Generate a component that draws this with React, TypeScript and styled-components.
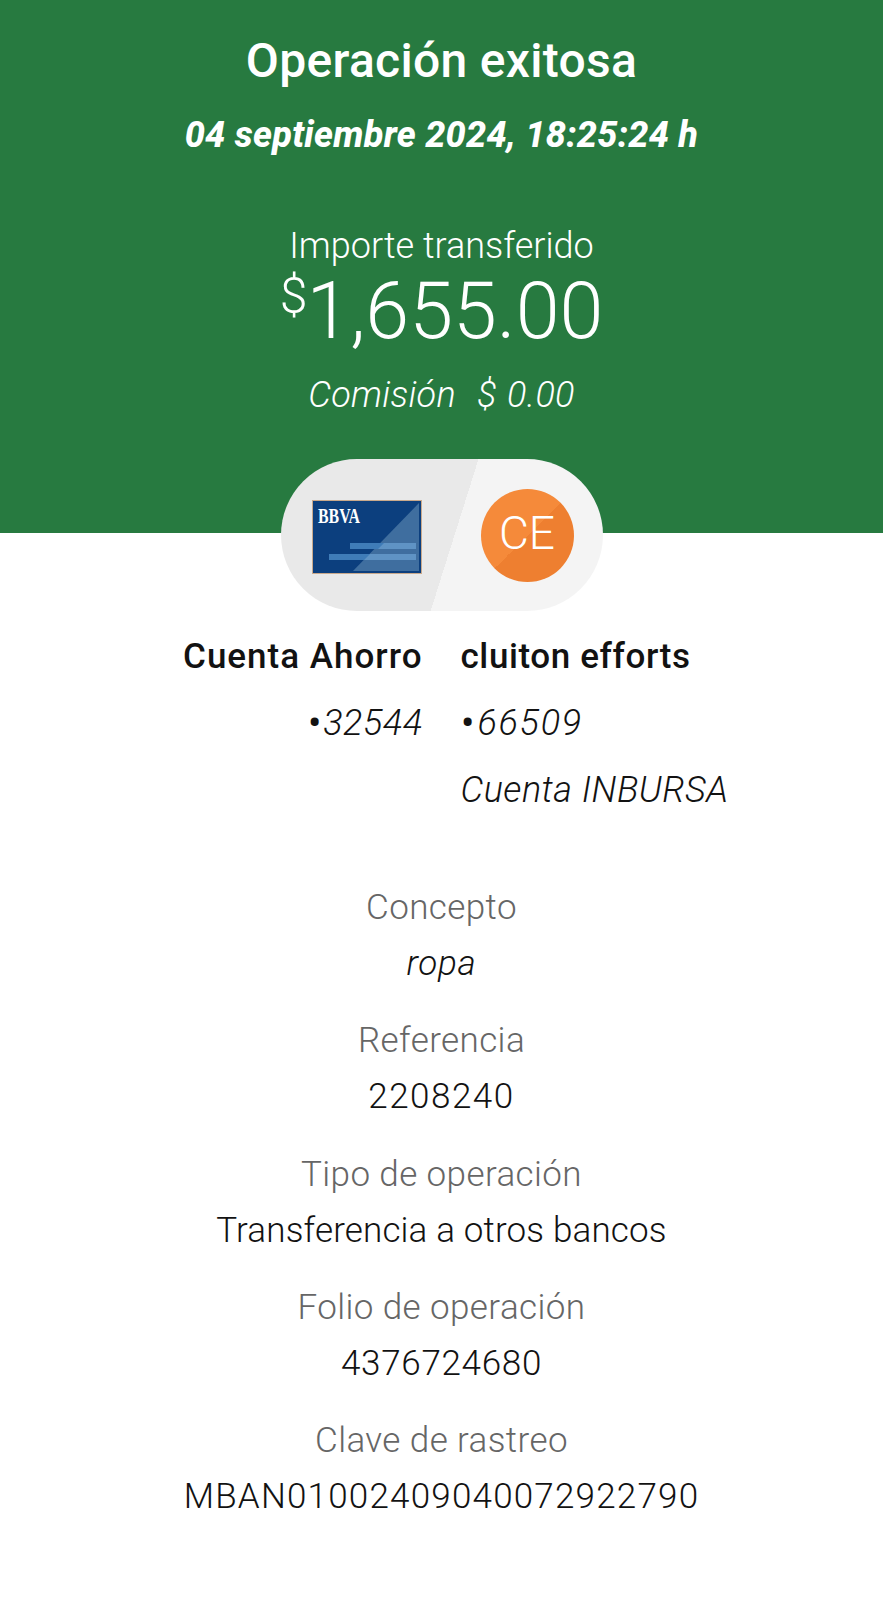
import React from 'react';
import styled, { createGlobalStyle } from 'styled-components';

const GlobalStyle = createGlobalStyle`
  html, body {
    margin: 0;
    padding: 0;
    background: #fff;
  }
  body {
    font-family: 'Roboto', 'Liberation Sans', sans-serif;
  }
`;

const Page = styled.div`
  width: 883px;
  height: 1600px;
  overflow: hidden;
  display: flex;
  flex-direction: column;
  align-items: center;
  background: #fff;
`;

const Header = styled.header`
  align-self: stretch;
  height: 533px;
  padding-top: 34px;
  box-sizing: border-box;
  display: flex;
  flex-direction: column;
  align-items: center;
  background: #277a40;
  color: #fff;
`;

const Title = styled.h1`
  margin: 0;
  font-size: 48px;
  line-height: 54px;
  font-weight: 500;
  letter-spacing: 0.3px;
`;

const DateLine = styled.div`
  margin-top: 26px;
  font-size: 36px;
  line-height: 42px;
  font-weight: 800;
  font-style: italic;
  letter-spacing: 0.3px;
`;

const AmountLabel = styled.div`
  margin-top: 69px;
  font-size: 36px;
  line-height: 42px;
  font-weight: 300;
`;

const Amount = styled.div`
  margin-top: 3px;
  display: flex;
  align-items: flex-start;
  font-size: 79px;
  line-height: 82px;
  font-weight: 300;
`;

const Currency = styled.span`
  font-size: 50px;
  line-height: 52px;
  margin-right: -1px;
`;

const Fee = styled.div`
  margin-top: 22px;
  font-size: 36px;
  line-height: 42px;
  font-weight: 300;
  font-style: italic;
  letter-spacing: 0.3px;
  word-spacing: 1.5px;
  white-space: pre;
`;

const Pill = styled.div`
  width: 322px;
  height: 152px;
  margin-top: -74px;
  padding: 0 29px 0 31px;
  box-sizing: border-box;
  flex: none;
  display: flex;
  align-items: center;
  justify-content: space-between;
  border-radius: 76px;
  background: linear-gradient(107.5deg, #e9e9e9 calc(50% + 12px), #f4f4f4 calc(50% + 12px));
`;

const CardArt = styled.svg`
  margin-top: 4px;
`;

const Avatar = styled.div`
  width: 93px;
  height: 93px;
  padding-bottom: 5px;
  box-sizing: border-box;
  display: flex;
  align-items: center;
  justify-content: center;
  border-radius: 50%;
  background: linear-gradient(135deg, #f58a3a 50%, #ee7f30 50%);
  color: #fff;
  font-size: 46px;
  font-weight: 300;
`;

const Accounts = styled.section`
  align-self: stretch;
  margin-top: 25px;
  display: grid;
  grid-template-columns: 1fr 1fr;
  column-gap: 38px;
`;

const AccountColumn = styled.div<{ $side: 'left' | 'right' }>`
  display: flex;
  flex-direction: column;
  gap: 25px;
  text-align: ${(p) => p.$side};
  color: #121212;
`;

const AccountName = styled.div<{ $tracking: number }>`
  margin-bottom: -1px;
  font-size: 35px;
  line-height: 42px;
  font-weight: 500;
  letter-spacing: ${(p) => p.$tracking}px;
`;

const AccountLine = styled.div<{ $tracking: number }>`
  font-size: 36px;
  line-height: 42px;
  font-weight: 300;
  font-style: italic;
  letter-spacing: ${(p) => p.$tracking}px;
`;

const Dot = styled.span`
  margin-right: 1px;
  font-size: 44px;
  line-height: 0;
  font-style: normal;
  vertical-align: -3px;
`;

const Details = styled.section`
  margin-top: 76px;
  display: flex;
  flex-direction: column;
  gap: 35.25px;
  text-align: center;
`;

const Detail = styled.div`
  display: flex;
  flex-direction: column;
  gap: 14px;
`;

const DetailLabel = styled.div`
  font-size: 35px;
  line-height: 42px;
  font-weight: 300;
  letter-spacing: 0.4px;
  color: #666;
`;

const DetailValue = styled.div<{ $italic?: boolean; $tracking: number }>`
  font-size: 35px;
  line-height: 42px;
  font-weight: 300;
  letter-spacing: ${(p) => p.$tracking}px;
  color: #121212;
  font-style: ${(p) => (p.$italic ? 'italic' : 'normal')};
`;

function BankCard() {
  return (
    <CardArt width="110" height="74" viewBox="0 0 110 74">
      <rect x="0.5" y="0.5" width="109" height="73" fill="#0c3f7e" stroke="#c9a98c" />
      <path d="M107 3 V71 H41 Z" fill="#3f6e9f" />
      <rect x="38" y="43" width="66" height="6" fill="#3f7cb8" />
      <rect x="17" y="54" width="87" height="6" fill="#3f7cb8" />
      <path d="M72 43 H104 V49 H66 Z M58 54 H104 V60 H52 Z" fill="#5f93c4" />
      <text
        x="6"
        y="23"
        fill="#fff"
        fontFamily="Liberation Serif, serif"
        fontSize="20"
        fontWeight="700"
        textLength="42"
        lengthAdjust="spacingAndGlyphs"
      >
        BBVA
      </text>
    </CardArt>
  );
}

const details = [
  { label: 'Concepto', value: 'ropa', italic: true, tracking: 0.7 },
  { label: 'Referencia', value: '2208240', tracking: 1.5 },
  { label: 'Tipo de operación', value: 'Transferencia a otros bancos', tracking: 0.15 },
  { label: 'Folio de operación', value: '4376724680', tracking: 0.7 },
  { label: 'Clave de rastreo', value: 'MBAN01002409040072922790', tracking: 1.2 },
];

export default function App() {
  return (
    <Page>
      <GlobalStyle />
      <Header>
        <Title>Operación exitosa</Title>
        <DateLine>04 septiembre 2024, 18:25:24 h</DateLine>
        <AmountLabel>Importe transferido</AmountLabel>
        <Amount>
          <Currency>$</Currency>1,655.00
        </Amount>
        <Fee>Comisión  $ 0.00</Fee>
      </Header>
      <Pill>
        <BankCard />
        <Avatar>CE</Avatar>
      </Pill>
      <Accounts>
        <AccountColumn $side="right">
          <AccountName $tracking={1}>Cuenta Ahorro</AccountName>
          <AccountLine $tracking={0.5}>
            <Dot>•</Dot>32544
          </AccountLine>
        </AccountColumn>
        <AccountColumn $side="left">
          <AccountName $tracking={0.6}>cluiton efforts</AccountName>
          <AccountLine $tracking={1.7}>
            <Dot>•</Dot>66509
          </AccountLine>
          <AccountLine $tracking={0.5}>Cuenta INBURSA</AccountLine>
        </AccountColumn>
      </Accounts>
      <Details>
        {details.map((d) => (
          <Detail key={d.label}>
            <DetailLabel>{d.label}</DetailLabel>
            <DetailValue $italic={d.italic} $tracking={d.tracking}>
              {d.value}
            </DetailValue>
          </Detail>
        ))}
      </Details>
    </Page>
  );
}
